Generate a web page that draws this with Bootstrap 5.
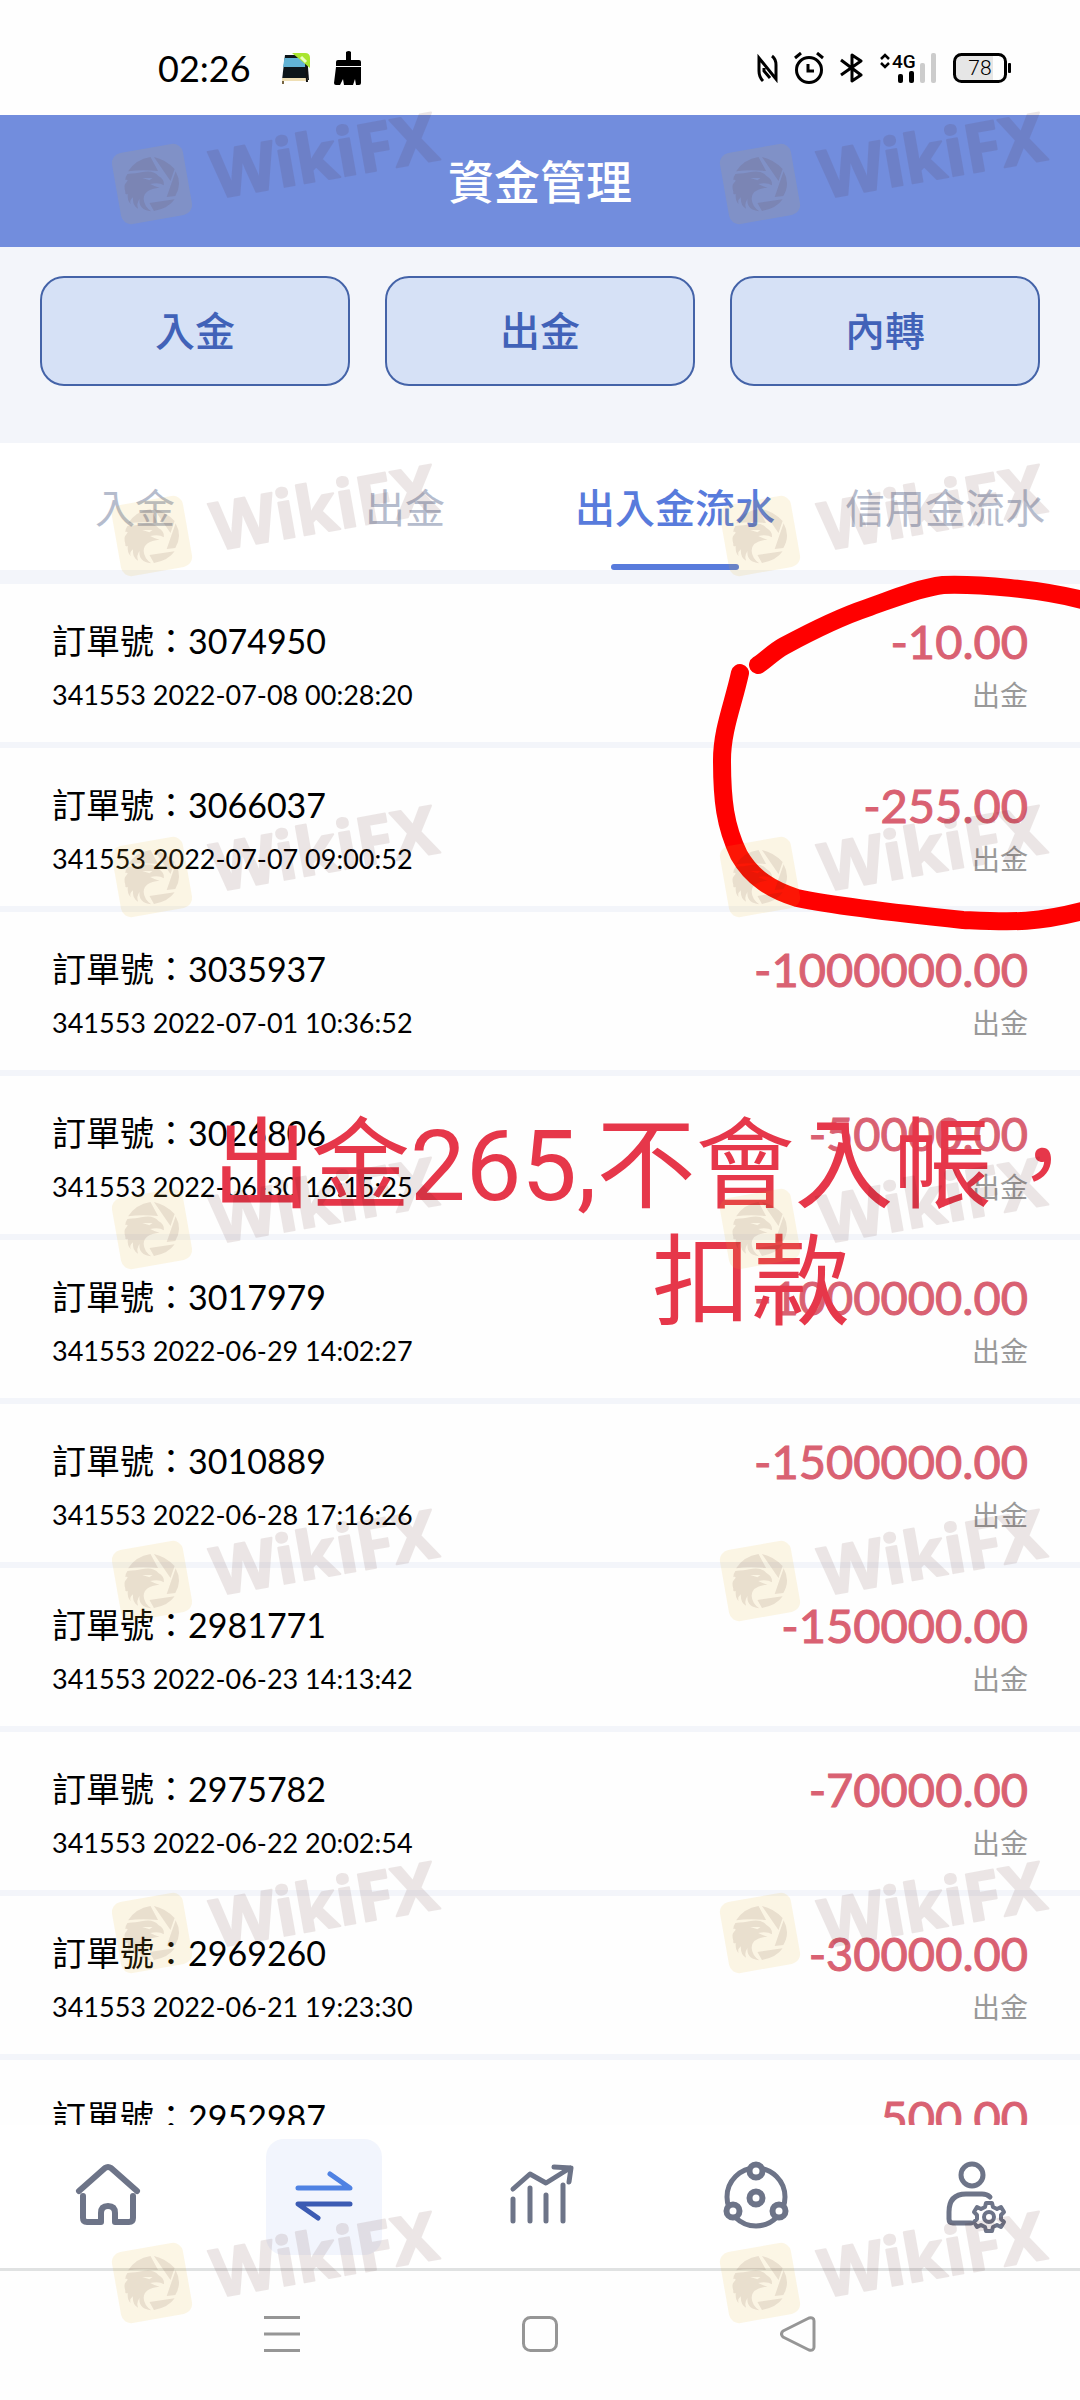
<!DOCTYPE html>
<html lang="zh-Hant">
<head>
<meta charset="utf-8">
<meta name="viewport" content="width=device-width, initial-scale=1">
<title>資金管理</title>
<link href="https://cdn.jsdelivr.net/npm/bootstrap@5.3.0/dist/css/bootstrap.min.css" rel="stylesheet">
<style>
body{font-family:Lato,"Noto Sans CJK TC",sans-serif;color:#000;background:#fff}
.screen{height:100vh;background:#f3f5fa;overflow:hidden}
.status-bar{height:115px;padding:20px 69px 0 158px;background:#fefefe}
.clock{font-size:36px;line-height:48px}
.status-left{gap:23px}
.status-left .clock{margin-right:7px}
.status-right{gap:16px}
.app-head{height:132px;background:#728ddd;color:#fff;font-size:46px;font-weight:500;line-height:134px}
.actions{padding:29px 40px 57px;gap:35px}
.action-btn{height:110px;border:2px solid #4463a8;border-radius:24px;background:#d6e1f6;color:#4162b8;font-size:40px;font-weight:500}
.action-btn:hover{background:#c7d6f2;border-color:#4463a8;color:#4162b8}
.tabs{background:#fff;margin-bottom:14px}
.tabs .tab-link{height:127px;font-size:40px;line-height:130px;color:#b5bccd;text-decoration:none;white-space:nowrap}
.tabs .tab-link.active{color:#587bdc;font-weight:500}
.tabs .tab-link.active::after{content:"";position:absolute;left:50%;bottom:0;width:128px;height:6px;margin-left:-64px;border-radius:3px;background:#587bdc}
.orders{min-height:0;overflow-y:auto;scrollbar-width:none}
.orders::-webkit-scrollbar{display:none}
.order{height:158px;margin-bottom:6px;padding:30px 52px 20px;background:#fefefe;line-height:54px}
.order-id{font-size:34px}
.order-time{font-size:27px}
.amount{font-size:47px;color:#d96172;-webkit-text-stroke:1px #d96172}
.kind{font-size:28px;color:#999}
.tabbar{background:#fff;padding:14px 0 13px}
.tabbar .pill{width:116px;height:116px;border-radius:18px}
.tabbar .pill.active{background:#f2f5fd}
.tabbar svg{display:block;fill:none;stroke:#6d7488;stroke-linecap:round;stroke-linejoin:round}
.sysbar{height:132px;padding-bottom:3px;border-top:3px solid #e0e2e2;background:#fefefe;gap:222px}
.sysbar svg{display:block;fill:none;stroke:#969696;stroke-width:3}
.ink{left:0;top:0;width:100%;height:100%;overflow:hidden;pointer-events:none}
.scribble{position:absolute;right:0;top:570px}
.note{position:absolute;left:212px;top:1108px;font-family:Roboto,"Noto Sans CJK TC",sans-serif;font-size:99px;line-height:117px;color:#e6374a;white-space:nowrap}
.note-end{padding-left:440px}
.stamps{display:grid;grid-template-columns:608px 608px;grid-template-rows:352px 341px 352px 352px 352px 350px 157px;padding:108px 0 0 108px}
.stamps svg{overflow:visible}
</style>
<script src="https://cdn.jsdelivr.net/npm/bootstrap@5.3.0/dist/js/bootstrap.bundle.min.js"></script>
</head>
<body>
<svg width="0" height="0" class="position-absolute" aria-hidden="true">
<symbol id="stamp" viewBox="0 0 350 124" overflow="visible">
<rect x="8" y="40" width="72" height="72" rx="10" transform="rotate(-10 44 76)" fill="#e8b92c" fill-opacity=".12"/>
<g transform="translate(-108 -108) scale(.3444 .3333)" fill="#4c1914" fill-opacity=".1">
<path d="M372 514Q394 478 437 471L459 513Q410 508 372 514ZM447 471Q480 478 507 507L495 543ZM510 514Q530 552 509 588L484 591ZM434 609L507 598Q490 625 447 633Z"/>
<path fill-rule="evenodd" d="M370 522Q398 520 410 517Q445 508 460 528Q478 538 476 556Q462 546 436 552Q447 558 463 563Q418 567 417 596Q418 618 439 634Q402 630 405 597Q395 612 401 626Q384 618 386 592Q374 602 380 613Q369 603 371 582Q362 586 364 576Q358 555 366 548Q376 538 364 540Q364 530 370 522ZM413 534L443 534L434 541Z"/>
</g>
<text x="0" y="0" transform="translate(108 91) rotate(-10)" font-family="Noto Sans, sans-serif" font-weight="700" font-size="67" fill="#4c1914" stroke="#4c1914" stroke-width="2" stroke-linejoin="round" opacity=".1">WikiFX</text>
</symbol>
</svg>

<div class="screen d-flex flex-column position-relative">
<header class="status-bar d-flex justify-content-between align-items-center flex-shrink-0">
<div class="status-left d-flex align-items-center">
<span class="clock">02:26</span>
<svg width="30" height="32" viewBox="0 0 30 32"><path d="M4 3h22l2 25-27 0z" fill="#0d151a"/><path d="M3.500 6h20l1 9H2z" fill="#62b3d5"/><path d="M1 26h26v3H1z" fill="#efdfb5"/><path d="M25 8l1 22" stroke="#111" stroke-width="2"/><path d="M2 29v3" stroke="#764" stroke-width="2"/><path d="M11 1h13q5 0 5 5v10z" fill="#a8e52f"/><path d="M20 5l5 5" stroke="#eaffc0" stroke-width="3"/></svg>
<svg width="28" height="34" viewBox="0 0 28 34"><path d="M12 1q3-2 5 0v8h8q2 0 2 2v4H2v-4q0-2 2-2h8zM2 16h25v16q0 2-2 2h-3l-1-6-2 6h-9l-1-6-3 6H2q-2 0-2-2z"/></svg>
</div>
<div class="status-right d-flex align-items-center">
<svg width="21" height="30" viewBox="0 0 21 30" fill="none" stroke="#000" stroke-width="3"><path d="M6 28Q2 24 2 18V5l17 21V12q0-6-4-9M7 15v3l6 7"/></svg>
<svg width="30" height="32" viewBox="0 0 30 32" fill="none" stroke="#000" stroke-width="3"><circle cx="15" cy="18" r="12.500"/><path d="M14 12v7h6M1 6l6-5M29 6l-6-5"/></svg>
<svg width="23" height="30" viewBox="0 0 23 30" fill="none" stroke="#000" stroke-width="3" stroke-linejoin="round"><path d="M1 7l20 15-9 6V2l9 6L1 22"/></svg>
<svg width="58" height="32" viewBox="0 0 58 32"><g fill="none" stroke="#000" stroke-width="2.500"><path d="M2 7l4-4 4 4M2 11l4 4 4-4"/></g><text x="13" y="16" font-family="Roboto, sans-serif" font-weight="500" font-size="19">4G</text><rect x="19" y="22" width="5" height="9" rx="2"/><rect x="30" y="19" width="5" height="12" rx="2"/><rect x="41" y="11" width="5" height="20" rx="2" fill="#ccc"/><rect x="52" y="1" width="5" height="30" rx="2" fill="#ccc"/></svg>
<svg width="58" height="30" viewBox="0 0 58 30"><path d="M7 3h33v24H7q-4 0-4-4V7q0-4 4-4z" fill="#e6e6e6"/><rect x="1.500" y="1.500" width="51" height="27" rx="7" fill="none" stroke="#000" stroke-width="3"/><rect x="55" y="10" width="3" height="10" rx="1"/><text x="27" y="22" text-anchor="middle" font-family="Roboto, sans-serif" font-weight="300" font-size="21">78</text></svg>
</div>
</header>

<h1 class="app-head text-center mb-0 flex-shrink-0">資金管理</h1>

<div class="actions d-flex flex-shrink-0">
<button type="button" class="btn action-btn flex-fill">入金</button>
<button type="button" class="btn action-btn flex-fill">出金</button>
<button type="button" class="btn action-btn flex-fill">內轉</button>
</div>

<nav class="tabs d-flex flex-shrink-0">
<a href="#" class="tab-link col-3 text-center position-relative">入金</a>
<a href="#" class="tab-link col-3 text-center position-relative">出金</a>
<a href="#" class="tab-link col-3 text-center position-relative active" aria-current="page">出入金流水</a>
<a href="#" class="tab-link col-3 text-center position-relative">信用金流水</a>
</nav>

<main class="orders flex-fill">
<div class="order d-flex justify-content-between"><div><div class="order-id">訂單號：3074950</div><div class="order-time">341553 2022-07-08 00:28:20</div></div><div class="text-end"><div class="amount">-10.00</div><div class="kind">出金</div></div></div>
<div class="order d-flex justify-content-between"><div><div class="order-id">訂單號：3066037</div><div class="order-time">341553 2022-07-07 09:00:52</div></div><div class="text-end"><div class="amount">-255.00</div><div class="kind">出金</div></div></div>
<div class="order d-flex justify-content-between"><div><div class="order-id">訂單號：3035937</div><div class="order-time">341553 2022-07-01 10:36:52</div></div><div class="text-end"><div class="amount">-1000000.00</div><div class="kind">出金</div></div></div>
<div class="order d-flex justify-content-between"><div><div class="order-id">訂單號：3026806</div><div class="order-time">341553 2022-06-30 16:15:25</div></div><div class="text-end"><div class="amount">-50000.00</div><div class="kind">出金</div></div></div>
<div class="order d-flex justify-content-between"><div><div class="order-id">訂單號：3017979</div><div class="order-time">341553 2022-06-29 14:02:27</div></div><div class="text-end"><div class="amount">-1000000.00</div><div class="kind">出金</div></div></div>
<div class="order d-flex justify-content-between"><div><div class="order-id">訂單號：3010889</div><div class="order-time">341553 2022-06-28 17:16:26</div></div><div class="text-end"><div class="amount">-1500000.00</div><div class="kind">出金</div></div></div>
<div class="order d-flex justify-content-between"><div><div class="order-id">訂單號：2981771</div><div class="order-time">341553 2022-06-23 14:13:42</div></div><div class="text-end"><div class="amount">-150000.00</div><div class="kind">出金</div></div></div>
<div class="order d-flex justify-content-between"><div><div class="order-id">訂單號：2975782</div><div class="order-time">341553 2022-06-22 20:02:54</div></div><div class="text-end"><div class="amount">-70000.00</div><div class="kind">出金</div></div></div>
<div class="order d-flex justify-content-between"><div><div class="order-id">訂單號：2969260</div><div class="order-time">341553 2022-06-21 19:23:30</div></div><div class="text-end"><div class="amount">-30000.00</div><div class="kind">出金</div></div></div>
<div class="order d-flex justify-content-between"><div><div class="order-id">訂單號：2952987</div></div><div class="text-end"><div class="amount">500.00</div></div></div>
</main>

<nav class="tabbar d-flex justify-content-around flex-shrink-0">
<a href="#" class="pill" aria-label="首頁"><svg width="116" height="116" stroke-width="6"><path d="M29 52L55 29q3-2 6 0L87 52M33 57v22q0 4 4 4h14V74q0-7 7-7t7 7v9h14q4 0 4-4V57"/></svg></a>
<a href="#" class="pill active" aria-label="資金"><svg width="116" height="116" stroke-width="5"><path d="M32 49h52L64 35" stroke="#4f82e3"/><path d="M84 65H32l20 14" stroke="#3c5bb3"/></svg></a>
<a href="#" class="pill" aria-label="行情"><svg width="116" height="116" stroke-width="5"><path d="M31 50l17-15 16 9 24-15M72 28l17 1-2 14M31 60v22M48 49v33M64 56v26M81 46v36"/></svg></a>
<a href="#" class="pill" aria-label="社群"><svg width="116" height="116" stroke-width="5"><circle cx="58" cy="58" r="29"/><g fill="#fff" stroke-width="6"><circle cx="58" cy="32" r="6.500"/><circle cx="58" cy="59" r="6.500"/><circle cx="35" cy="72" r="6.500"/><circle cx="81" cy="72" r="6.500"/></g></svg></a>
<a href="#" class="pill" aria-label="我的"><svg width="116" height="116" stroke-width="5"><circle cx="58" cy="36" r="11"/><path d="M76 58q-3-3-8-3H52q-17 0-17 18v7q0 4 4 4h18"/><g stroke-width="4"><circle cx="75" cy="78" r="5"/><path d="M72 64h6l1 4 4 2 4-2 3 5-3 3v4l3 3-3 5-4-2-4 2-1 4h-6l-1-4-4-2-4 2-3-5 3-3v-4l-3-3 3-5 4 2 4-2z"/></g></svg></a>
</nav>

<footer class="sysbar d-flex justify-content-center align-items-center flex-shrink-0">
<svg width="36" height="36"><path d="M0 1.500h36M0 18h36M0 34.500h36"/></svg>
<svg width="36" height="36"><rect x="1.500" y="1.500" width="33" height="33" rx="7"/></svg>
<svg width="36" height="36" stroke-linejoin="round"><path d="M3 15L29 2q5-1 5 3v26q0 4-5 3L3 21q-3-3 0-6z"/></svg>
</footer>

<div class="ink position-absolute">
<svg class="scribble" width="368" height="370" viewBox="712 570 368 370" fill="none" stroke="#f00" stroke-width="18" stroke-linecap="round" stroke-linejoin="round"><path d="M758 665C766 660 773 652 784 646C810 632 846 615 867 608C890 600 918 588 943 585C975 584 1040 588 1090 602"/><path d="M740 673C733 705 722 730 722 760C722 800 725 826 739 855C752 878 772 890 797 898C840 907 905 914 963 920C1010 922 1035 924 1090 909"/></svg>
<div class="note"><div>出金265,不會入帳，</div><div class="note-end">扣款</div></div>
</div>
<div class="ink stamps position-absolute" aria-hidden="true">
<svg width="350" height="124"><use href="#stamp"/></svg><svg width="350" height="124"><use href="#stamp"/></svg>
<svg width="350" height="124"><use href="#stamp"/></svg><svg width="350" height="124"><use href="#stamp"/></svg>
<svg width="350" height="124"><use href="#stamp"/></svg><svg width="350" height="124"><use href="#stamp"/></svg>
<svg width="350" height="124"><use href="#stamp"/></svg><svg width="350" height="124"><use href="#stamp"/></svg>
<svg width="350" height="124"><use href="#stamp"/></svg><svg width="350" height="124"><use href="#stamp"/></svg>
<svg width="350" height="124"><use href="#stamp"/></svg><svg width="350" height="124"><use href="#stamp"/></svg>
<svg width="350" height="124"><use href="#stamp"/></svg><svg width="350" height="124"><use href="#stamp"/></svg>
</div>
</div>
</body>
</html>
